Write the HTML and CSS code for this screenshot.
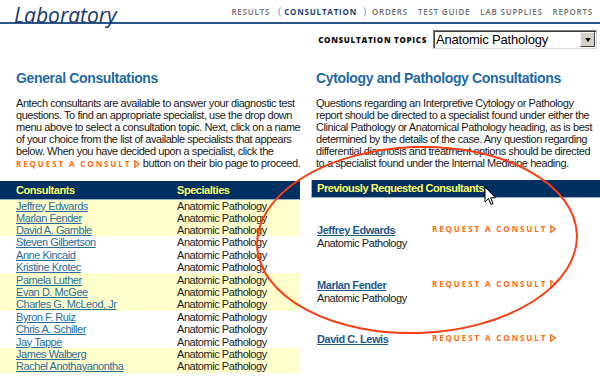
FILE: index.html
```html
<!DOCTYPE html>
<html lang="en">
<head>
    <meta charset="UTF-8">
    <title>Laboratory - Consultation</title>
    <link rel="stylesheet" href="styles.css">
</head>
<body>
<div class="page">
    <div class="topbar">
        <div class="logo">Laboratory</div>
        <div class="nav">
            <a href="#">Results</a>
            <span class="paren">(</span><a href="#" class="current">Consultation</a><span class="paren">)</span>
            <a href="#">Orders</a>
            <a href="#">Test Guide</a>
            <a href="#">Lab Supplies</a>
            <a href="#">Reports</a>
        </div>
    </div>

    <div class="topics">
        <span class="topics-label">Consultation Topics</span>
        <div class="select-wrap">
            <select class="topic-select">
                <option>Anatomic Pathology</option>
                <option>Clinical Pathology</option>
                <option>Internal Medicine</option>
            </select>
            <span class="select-btn"><span class="down"></span></span>
        </div>
    </div>

    <div class="columns">
        <div class="col col-left">
            <h2>General Consultations</h2>
            <p>Antech consultants are available to answer your diagnostic test questions. To find an appropriate specialist, use the drop down menu above to select a consultation topic. Next, click on a name of your choice from the list of available specialists that appears below. When you have decided upon a specialist, click the <span class="consult">Request a Consult <svg class="tri" width="6" height="8" viewBox="0 0 6 8"><path d="M0.8 0.8 L5.2 4 L0.8 7.2 Z" fill="none" stroke="#ff6a13" stroke-width="1.4"/></svg></span> button on their bio page to proceed.</p>

            <table class="consultants">
                <thead>
                    <tr><th>Consultants</th><th>Specialties</th></tr>
                </thead>
                <tbody>
                    <tr class="hl"><td><a href="#">Jeffrey Edwards</a></td><td>Anatomic Pathology</td></tr>
                    <tr class="hl"><td><a href="#">Marlan Fender</a></td><td>Anatomic Pathology</td></tr>
                    <tr class="hl"><td><a href="#">David A. Gamble</a></td><td>Anatomic Pathology</td></tr>
                    <tr><td><a href="#">Steven Gilbertson</a></td><td>Anatomic Pathology</td></tr>
                    <tr><td><a href="#">Anne Kincaid</a></td><td>Anatomic Pathology</td></tr>
                    <tr><td><a href="#">Kristine Krotec</a></td><td>Anatomic Pathology</td></tr>
                    <tr class="hl"><td><a href="#">Pamela Luther</a></td><td>Anatomic Pathology</td></tr>
                    <tr class="hl"><td><a href="#">Evan D. McGee</a></td><td>Anatomic Pathology</td></tr>
                    <tr class="hl"><td><a href="#">Charles G. McLeod, Jr</a></td><td>Anatomic Pathology</td></tr>
                    <tr><td><a href="#">Byron F. Ruiz</a></td><td>Anatomic Pathology</td></tr>
                    <tr><td><a href="#">Chris A. Schiller</a></td><td>Anatomic Pathology</td></tr>
                    <tr><td><a href="#">Jay Tappe</a></td><td>Anatomic Pathology</td></tr>
                    <tr class="hl"><td><a href="#">James Walberg</a></td><td>Anatomic Pathology</td></tr>
                    <tr class="hl"><td><a href="#">Rachel Anothayanontha</a></td><td>Anatomic Pathology</td></tr>
                </tbody>
            </table>
        </div>

        <div class="col col-right">
            <h2>Cytology and Pathology Consultations</h2>
            <p>Questions regarding an Interpretive Cytology or Pathology report should be directed to a specialist found under either the Clinical Pathology or Anatomical Pathology heading, as is best determined by the details of the case. Any question regarding differential diagnosis and treatment options should be directed to a specialist found under the Internal Medicine heading.</p>

            <div class="bar">Previously Requested Consultants</div>
            <div class="prev-list">
                <div class="prev-item">
                    <div class="who">
                        <a href="#">Jeffrey Edwards</a>
                        <span>Anatomic Pathology</span>
                    </div>
                    <a href="#" class="consult">Request a Consult <svg class="tri" width="6" height="8" viewBox="0 0 6 8"><path d="M0.8 0.8 L5.2 4 L0.8 7.2 Z" fill="none" stroke="#ff6a13" stroke-width="1.4"/></svg></a>
                </div>
                <div class="prev-item">
                    <div class="who">
                        <a href="#">Marlan Fender</a>
                        <span>Anatomic Pathology</span>
                    </div>
                    <a href="#" class="consult">Request a Consult <svg class="tri" width="6" height="8" viewBox="0 0 6 8"><path d="M0.8 0.8 L5.2 4 L0.8 7.2 Z" fill="none" stroke="#ff6a13" stroke-width="1.4"/></svg></a>
                </div>
                <div class="prev-item">
                    <div class="who">
                        <a href="#">David C. Lewis</a>
                    </div>
                    <a href="#" class="consult">Request a Consult <svg class="tri" width="6" height="8" viewBox="0 0 6 8"><path d="M0.8 0.8 L5.2 4 L0.8 7.2 Z" fill="none" stroke="#ff6a13" stroke-width="1.4"/></svg></a>
                </div>
            </div>
        </div>
    </div>

    <!-- annotation drawn over the screenshot -->
    <svg class="markup" width="600" height="377" viewBox="0 0 600 377">
        <ellipse cx="417" cy="240" rx="160" ry="93" transform="rotate(-2 417 240)" fill="none" stroke="#ff3c10" stroke-width="2"/>
    </svg>
    <svg class="cursor" width="13" height="21" viewBox="0 0 13 21">
        <path d="M1 1 L1 16 L4.5 12.5 L7 18.5 L9 17.6 L6.6 11.8 L11.4 11.8 Z" fill="#fff" stroke="#000" stroke-width="1" stroke-linejoin="miter"/>
    </svg>
</div>
</body>
</html>
```

FILE: styles.css
```css
* { margin: 0; padding: 0; box-sizing: border-box; }

body {
    background: #fff;
    font-family: "Liberation Sans", Arial, sans-serif;
    font-size: 11px;
    letter-spacing: -0.45px;
    color: #1a1a1a;
}

.page {
    position: relative;
    width: 600px;
    height: 377px;
    overflow: hidden;
}

a { color: #2a6c9e; }

/* --- top bar --- */
.topbar {
    display: flex;
    justify-content: space-between;
    align-items: flex-end;
    height: 24px;
    border-bottom: 2px solid #2d5587;
    padding: 0 7px 0 14px;
}
.logo {
    font-family: "Open Sans", sans-serif;
    font-style: italic;
    font-size: 21px;
    letter-spacing: 0;
    line-height: 24px;
    color: #17386b;
    margin-bottom: -5px;
}
.nav {
    font-family: "Open Sans", sans-serif;
    font-size: 8px;
    font-weight: 600;
    letter-spacing: 0.8px;
    text-transform: uppercase;
    padding-bottom: 4px;
}
.nav a { color: #6f6f6f; text-decoration: none; margin-left: 7px; }
.nav .paren { color: #6ba6d8; font-weight: 400; font-size: 11px; margin-left: 5px; }
.nav .paren + a { margin-left: 2px; }
.nav a.current { color: #1d3f70; font-weight: 700; margin-right: 1px; }

/* --- topics select --- */
.topics {
    display: flex;
    justify-content: flex-end;
    align-items: center;
    gap: 6px;
    padding: 6px 3px 0 0;
}
.topics-label {
    font-family: "Open Sans", sans-serif;
    font-weight: 800;
    font-size: 8px;
    letter-spacing: 0.7px;
    text-transform: uppercase;
    color: #111;
}
.select-wrap { position: relative; }
.topic-select {
    appearance: none;
    -webkit-appearance: none;
    width: 164px;
    height: 19px;
    font-family: "Liberation Sans", Arial, sans-serif;
    font-size: 13px;
    letter-spacing: -0.2px;
    color: #000;
    background: #fff;
    border: 1px solid #7f7f7f;
    border-right-color: #d8d8d8;
    border-bottom-color: #d8d8d8;
    box-shadow: inset 1px 1px 0 #404040;
    padding: 0 0 0 2px;
    border-radius: 0;
}
.select-btn {
    position: absolute;
    right: 2px;
    top: 2px;
    width: 15px;
    height: 15px;
    background: #d4d0c8;
    border: 1px solid;
    border-color: #f4f4f4 #404040 #404040 #f4f4f4;
    display: flex;
    align-items: center;
    justify-content: center;
}
.select-btn .down {
    border-left: 3.5px solid transparent;
    border-right: 3.5px solid transparent;
    border-top: 4px solid #000;
}

/* --- columns --- */
.columns {
    display: grid;
    grid-template-columns: 300px 289px;
    gap: 11px;
    margin-top: 21px;
}
.col h2 {
    font-size: 14px;
    font-weight: 700;
    letter-spacing: -0.35px;
    color: #1f69a3;
    line-height: 16px;
}
.col p {
    margin-top: 11px;
    line-height: 12px;
    color: #1a1a1a;
}
.col-left h2, .col-left p { padding-left: 16px; }
.col-left p { margin-right: -6px; }
.col-right h2, .col-right p { padding-left: 5px; }

.consult {
    font-family: "Open Sans", sans-serif;
    font-weight: 700;
    font-size: 8px;
    letter-spacing: 1.9px;
    text-transform: uppercase;
    color: #ff6a13;
    text-decoration: none;
    white-space: nowrap;
}
.tri { vertical-align: -1px; margin-left: -1px; }

/* --- consultants table --- */
.consultants {
    width: 300px;
    border-collapse: collapse;
    margin-top: 11px;
}
.consultants th {
    background: #003061;
    color: #ffff66;
    text-align: left;
    font-size: 11px;
    height: 18px;
    border-bottom: 1px solid #9eb0c6;
}
.consultants th:first-child, .consultants td:first-child { padding-left: 16px; width: 177px; }
.consultants td { height: 12.4px; line-height: 12px; padding: 0; }
.consultants tr.hl td { background: #ffffcc; }

/* --- previous consultants --- */
.bar {
    margin-top: 11px;
    background: #003061;
    color: #ffff66;
    font-weight: 700;
    height: 18px;
    line-height: 17px;
    padding-left: 5px;
    border-bottom: 1px solid #9eb0c6;
    border-left: 1px solid #9eb0c6;
}
.prev-list { padding: 26px 0 0 6px; }
.prev-item {
    display: grid;
    grid-template-columns: 115px auto;
    height: 54.5px;
}
.who { display: flex; flex-direction: column; line-height: 13px; }
.who a { font-weight: 700; color: #1d5a8c; }
.prev-item .consult { line-height: 10px; }

/* --- overlays --- */
.markup { position: absolute; left: 0; top: 0; pointer-events: none; }
.cursor { position: absolute; left: 484px; top: 186px; }
```
